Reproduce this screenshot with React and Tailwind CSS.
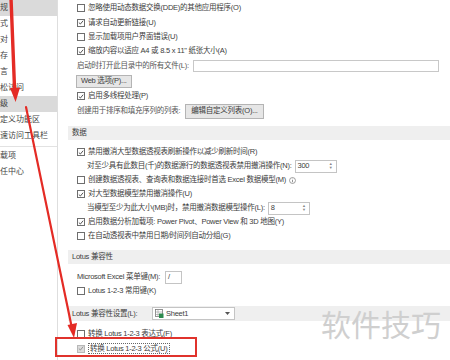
import React from 'react';

const Check = ({ checked, disabled }) => (
  <span
    className={`w-[8px] h-[8px] mr-[3px] shrink-0 border flex items-center justify-center ${
      disabled ? 'border-[#b8b8b8] bg-[#dcdcdc]' : 'border-[#6e6e6e] bg-white'
    }`}
  >
    {checked && (
      <svg width="7" height="7" viewBox="0 0 7 7">
        <path d="M1 3.6 L2.8 5.3 L6 1.4" fill="none" stroke={disabled ? '#8a8a8a' : '#3a3a3a'} strokeWidth="1" />
      </svg>
    )}
  </span>
);

const CheckRow = ({ checked, children, h = 'h-[14px]' }) => (
  <div className={`${h} flex items-center pl-[9px] whitespace-nowrap`}>
    <Check checked={checked} />
    <span>{children}</span>
  </div>
);

const Spin = ({ value, w }) => (
  <div className={`ml-[3px] ${w} h-[13px] border border-[#c4c4c4] bg-white flex items-center justify-between pl-[2px] pr-[3px]`}>
    <span>{value}</span>
    <span className="flex flex-col text-[4px] leading-[4px] text-[#888]">
      <span>▲</span>
      <span>▼</span>
    </span>
  </div>
);

const Header = ({ children, h = 'h-[14px]' }) => (
  <div className={`${h} bg-[#efefef] flex items-center pl-[4px] text-[#3e3e3e] whitespace-nowrap`}>{children}</div>
);

const sideItems = [
  { label: '常规', active: true },
  { label: '公式' },
  { label: '校对' },
  { label: '保存' },
  { label: '语言' },
  { label: '轻松访问' },
  { label: '高级', active: true },
  { label: '自定义功能区' },
  { label: '快速访问工具栏', sep: true },
  { label: '加载项' },
  { label: '信任中心' },
];

export default function App() {
  return (
    <div className="w-[450px] h-[360px] overflow-hidden relative bg-white flex font-['Liberation_Sans','Noto_Sans_CJK_SC',sans-serif] text-[7.5px] text-[#3c3c3c]">
      {/* left nav, cut off at the left edge */}
      <aside className="w-[58px] shrink-0 border-r border-[#dedede] text-[8px] text-[#444]">
        {sideItems.map(it => (
          <div key={it.label}>
            <div className={`h-[16px] flex items-center whitespace-nowrap overflow-hidden ${it.active ? 'bg-[#dadada]' : ''}`}>
              <span className="-ml-[8px]">{it.label}</span>
            </div>
            {it.sep && <div className="h-[4px] flex items-center"><div className="w-full h-px bg-[#e2e2e2]" /></div>}
          </div>
        ))}
      </aside>

      <main className="flex-1 pl-[10px] border-t border-[#e3e3e3] -mt-px tracking-[-0.25px]">
        <div className="pt-px">
          <CheckRow>忽略使用动态数据交换(DDE)的其他应用程序(O)</CheckRow>
          <CheckRow checked h="h-[15px]">请求自动更新链接(U)</CheckRow>
          <CheckRow>显示加载项用户界面错误(U)</CheckRow>
          <CheckRow checked>缩放内容以适应 A4 或 8.5 x 11" 纸张大小(A)</CheckRow>
          <div className="h-[15px] flex items-center pl-[9px] whitespace-nowrap">
            <span className="text-[#555]">启动时打开此目录中的所有文件(L):</span>
            <div className="ml-[4px] w-[246px] h-[12px] border border-[#c8c8c8] bg-white" />
          </div>
          <div className="h-[16px] flex items-center pl-[8px]">
            <div className="h-[13px] px-[4px] bg-[#e6e6e6] border border-[#b4b4b4] flex items-center whitespace-nowrap">Web 选项(P)...</div>
          </div>
          <CheckRow checked>启用多线程处理(P)</CheckRow>
          <div className="h-[16px] flex items-center pl-[9px] whitespace-nowrap">
            <span className="text-[#555]">创建用于排序和填充序列的列表:</span>
            <div className="ml-[5px] h-[15px] px-[5px] bg-[#e6e6e6] border border-[#b4b4b4] flex items-center">编辑自定义列表(O)...</div>
          </div>
        </div>

        <div className="mt-[7px]">
          <Header>数据</Header>
        </div>
        <div className="mt-[5px]">
          <CheckRow checked>禁用撤消大型数据透视表刷新操作以减少刷新时间(R)</CheckRow>
          <div className="h-[14px] flex items-center pl-[19px] whitespace-nowrap">
            <span>对至少具有此数目(千)的数据源行的数据透视表禁用撤消操作(N):</span>
            <Spin value="300" w="w-[42px]" />
          </div>
          <div className="h-[14px] flex items-center pl-[9px] whitespace-nowrap">
            <Check />
            <span>创建数据透视表、查询表和数据连接时首选 Excel 数据模型(M)</span>
            <svg className="ml-[3px]" width="7" height="7" viewBox="0 0 8 8">
              <circle cx="4" cy="4" r="3.4" fill="none" stroke="#777" strokeWidth="0.8" />
              <path d="M4 3.4 V6" stroke="#777" strokeWidth="0.9" />
              <circle cx="4" cy="2.2" r="0.5" fill="#777" />
            </svg>
          </div>
          <CheckRow checked>对大型数据模型禁用撤消操作(U)</CheckRow>
          <div className="h-[14px] flex items-center pl-[19px] whitespace-nowrap">
            <span>当模型至少为此大小(MB)时，禁用撤消数据模型操作(L):</span>
            <Spin value="8" w="w-[42px]" />
          </div>
          <CheckRow checked>启用数据分析加载项: Power Pivot、Power View 和 3D 地图(Y)</CheckRow>
          <CheckRow>在自动透视表中禁用日期/时间列自动分组(G)</CheckRow>
        </div>

        <div className="mt-[7px]">
          <Header>Lotus 兼容性</Header>
        </div>
        <div className="mt-[6px]">
          <div className="h-[14px] flex items-center pl-[9px] whitespace-nowrap">
            <span>Microsoft Excel 菜单键(M):</span>
            <div className="ml-[5px] w-[17px] h-[13px] border border-[#c4c4c4] bg-white flex items-center pl-[2px]">/</div>
          </div>
          <CheckRow>Lotus 1-2-3 常用键(K)</CheckRow>
        </div>

        <div className="mt-[8px]">
          <Header h="h-[15px]">
            <span className="w-[80px]">Lotus 兼容性设置(L):</span>
            <div className="w-[83px] h-[13px] border border-[#c4c4c4] bg-white flex items-center pl-[2px] pr-[4px]">
              <svg width="9" height="9" viewBox="0 0 9 9">
                <rect x="0.5" y="0.5" width="7" height="7" fill="#fff" stroke="#777" strokeWidth="0.8" />
                <path d="M0.5 3 H7.5 M0.5 5.5 H7.5 M3 0.5 V7.5" stroke="#999" strokeWidth="0.6" />
                <rect x="4" y="4.5" width="4.5" height="4.5" fill="#2e8b4e" />
              </svg>
              <span className="ml-[2px] flex-1">Sheet1</span>
              <svg width="5" height="3" viewBox="0 0 5 3">
                <path d="M0 0 H5 L2.5 3 Z" fill="#555" />
              </svg>
            </div>
          </Header>
        </div>
        <div className="mt-[5px]">
          <CheckRow h="h-[15px]">转换 Lotus 1-2-3 表达式(F)</CheckRow>
          <div className="h-[15px] flex items-center pl-[9px] whitespace-nowrap">
            <Check checked disabled />
            <span className="border border-dotted border-[#666] px-px leading-[9px]">转换 Lotus 1-2-3 公式(U)</span>
          </div>
        </div>
      </main>

      {/* annotation overlays */}
      <svg className="absolute inset-0 pointer-events-none" width="450" height="360" viewBox="0 0 450 360">
        <path d="M11 -2 L14.6 90" stroke="#e42b25" strokeWidth="3.4" strokeLinecap="round" />
        <polygon points="10,88 20,87.5 15.6,102" fill="#e42b25" />
        <path d="M26 107 L71.5 326" stroke="#e42b25" strokeWidth="2.2" strokeLinecap="round" />
        <polygon points="67.5,325 77,323 74,338" fill="#e42b25" />
      </svg>
      <div className="absolute left-[55px] top-[337px] w-[142px] h-[20px] border-2 border-[#e0332c] pointer-events-none" />
      <div className="absolute left-[321px] top-[305px] text-[30px] leading-[36px] text-[#cfcfcf] font-['Noto_Sans_CJK_SC',sans-serif] whitespace-nowrap pointer-events-none">
        软件技巧
      </div>
    </div>
  );
}
